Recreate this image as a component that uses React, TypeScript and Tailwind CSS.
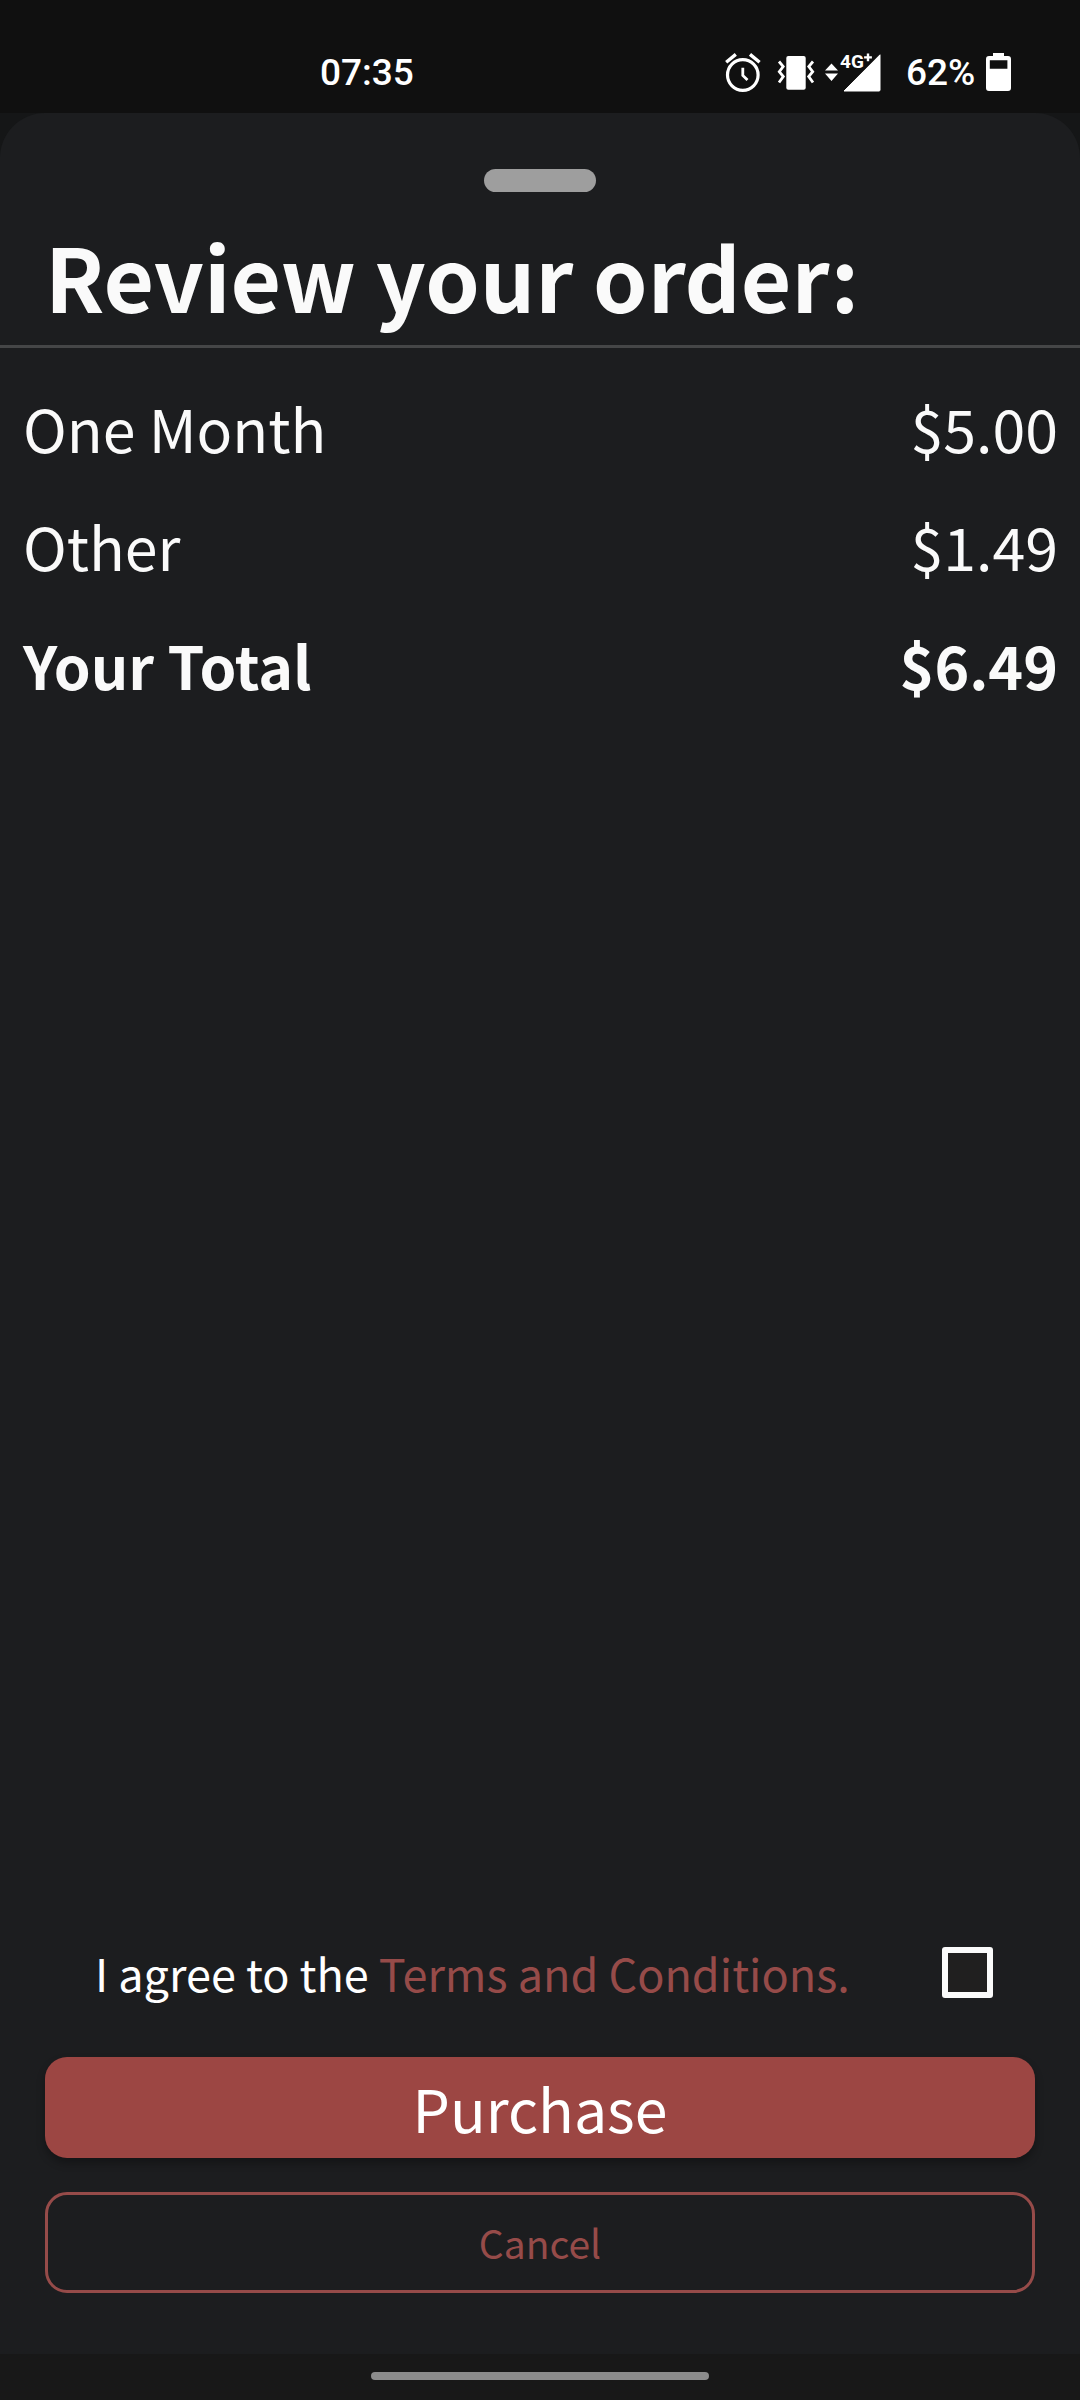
import { ReactNode } from "react";

const items = [
    { name: "One Month", price: "$5.00" },
    { name: "Other", price: "$1.49" },
];

function AlarmIcon() {
    return (
        <svg width="38" height="40" viewBox="0 0 38 40" fill="none" stroke="#fff">
            <circle cx="18.8" cy="23" r="15.3" strokeWidth="3.2" />
            <path d="M2.2 10.3 11.8 2.4M35.6 10.3 26 2.4" strokeWidth="3.4" />
            <path d="M18.8 15.8v7.7l4.7 4.6" strokeWidth="2.8" />
        </svg>
    );
}

function VibrateIcon() {
    return (
        <svg width="38" height="38" viewBox="0 0 38 38" fill="none" stroke="#fff">
            <rect x="9.3" y="3" width="19.4" height="33.8" rx="2" fill="#fff" stroke="none" />
            <path
                d="M2 8.5l4.2 5-3.9 5.2 4 4.9L2 29.5M36 8.5l-4.2 5 3.9 5.2-4 4.9 4.3 5.9"
                strokeWidth="2.8"
            />
        </svg>
    );
}

function SignalIcon() {
    return (
        <svg width="58" height="52" viewBox="0 -6 58 52" fill="#fff">
            <path d="M1 18.5 7.5 11.5l6.5 7zM1 21.5h13L7.5 29z" />
            <path
                d="M20 39 56 2.8V38a1 1 0 0 1-1 1z"
                stroke="#fff"
                strokeLinejoin="round"
            />
            <text x="16" y="16" className="font-[Roboto] text-[19px] font-bold">
                4G
            </text>
            <path d="M44 1.5v7.8M40.1 5.4h7.8" stroke="#fff" strokeWidth="2.4" />
        </svg>
    );
}

function BatteryIcon() {
    return (
        <svg width="25" height="38" viewBox="0 0 25 38">
            <path
                fill="#fff"
                fillRule="evenodd"
                d="M7 0h11v3h4a3 3 0 0 1 3 3v29a3 3 0 0 1-3 3H3a3 3 0 0 1-3-3V6a3 3 0 0 1 3-3h4zM3.8 7.2v8.6h17.6V7.2z"
            />
        </svg>
    );
}

function StatusBar() {
    return (
        <header className="flex h-[113px] items-center bg-[#101010] pt-[31px] pr-[69px] pl-[320px] font-[Roboto] text-[37px] font-medium text-white">
            <span className="pt-[2px]">07:35</span>
            <div className="ml-auto flex items-center">
                <AlarmIcon />
                <div className="ml-[15px]">
                    <VibrateIcon />
                </div>
                <div className="ml-[9px]">
                    <SignalIcon />
                </div>
                <span className="ml-[24px] w-[80px] pt-[2px]">62%</span>
                <BatteryIcon />
            </div>
        </header>
    );
}

function Row({ children, bold }: { children: ReactNode; bold?: boolean }) {
    return (
        <li
            className={
                "flex h-[118px] items-center justify-between " + (bold ? "mt-px font-bold" : "")
            }
        >
            {children}
        </li>
    );
}

export default function App() {
    return (
        <main className="flex h-[2400px] w-[1080px] flex-col bg-[#151617] font-['Noto_Sans_CJK_SC',sans-serif] text-[#fafafa]">
            <StatusBar />
            <div className="flex flex-1 flex-col rounded-t-[45px] bg-[#1c1d1f]">
                <div className="mx-auto mt-[56px] h-[23px] w-[112px] rounded-full bg-[#9e9e9e]" />
                <h1 className="mt-[24px] h-[129px] pl-[45px] text-[87.2px] leading-[118px] font-bold">
                    Review your order:
                </h1>
                <hr className="border-t-3 border-[#454647]" />
                <ul className="mt-[21px] pr-[22px] pl-[23px] text-[59px] leading-[118px]">
                    {items.map((item) => (
                        <Row key={item.name}>
                            <span>{item.name}</span>
                            <span>{item.price}</span>
                        </Row>
                    ))}
                    <Row bold>
                        <span>Your Total</span>
                        <span>$6.49</span>
                    </Row>
                </ul>
                <div className="mt-auto mb-[61px] flex flex-col px-[45px]">
                    <div className="mb-[59px] flex h-[51px] items-center justify-between pr-[42px] pl-[50px] text-[45px]">
                        <p className="text-white">
                            I agree to the{" "}
                            <a className="text-[#964b49]">Terms and Conditions.</a>
                        </p>
                        <div className="h-[51px] w-[51px] rounded-[3px] border-6 border-[#fafafa] bg-[#201f1f]" />
                    </div>
                    <button className="h-[101px] rounded-[22px] bg-[#9c4643] text-[59px] leading-none text-white shadow-[0_5px_8px_rgba(0,0,0,0.3)]">
                        Purchase
                    </button>
                    <button className="mt-[34px] h-[101px] rounded-[22px] border-3 border-[#964b49] text-[39px] leading-none text-[#964b49]">
                        Cancel
                    </button>
                </div>
            </div>
            <footer className="flex h-[46px] justify-center bg-[#181818] pt-[18px]">
                <div className="h-[8px] w-[338px] rounded-full bg-[#8c8c8c]" />
            </footer>
        </main>
    );
}
